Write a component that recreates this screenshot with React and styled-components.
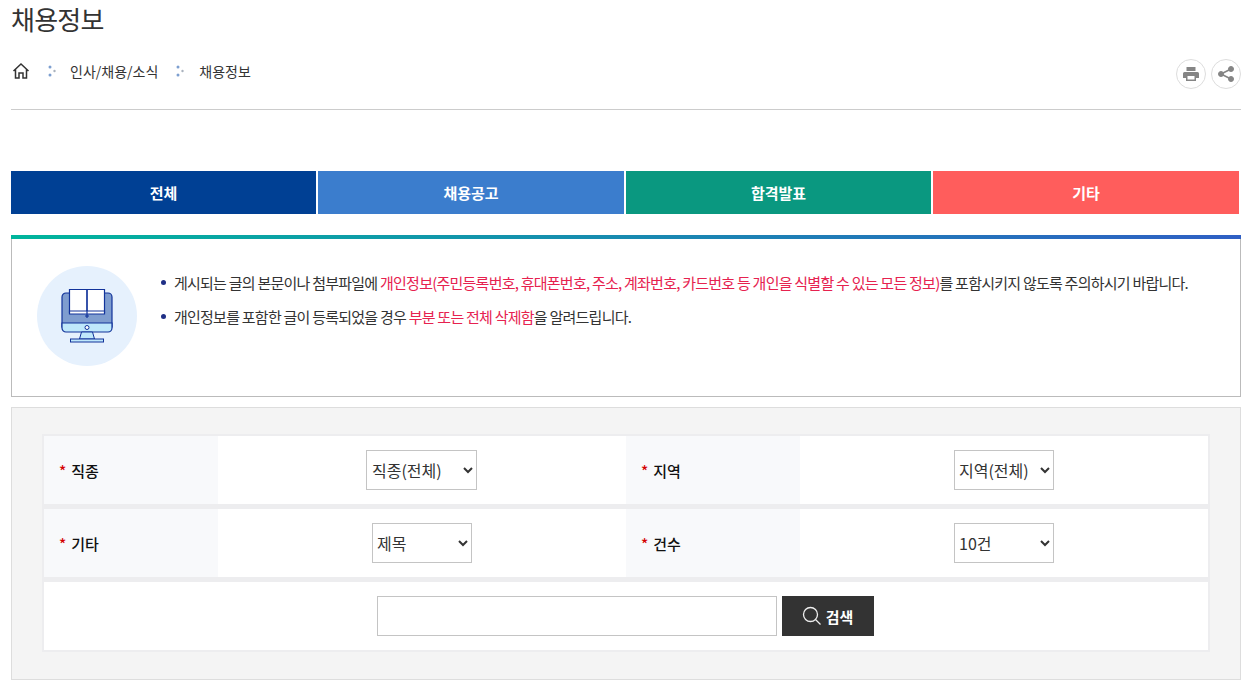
import React from 'react'
import styled, { createGlobalStyle } from 'styled-components'

const Global = createGlobalStyle`
  * { box-sizing: border-box; }
  body {
    margin: 0;
    background: #fff;
    color: #333;
    font-family: "Noto Sans CJK KR", "Noto Sans", sans-serif;
    font-size: 14px;
  }
`

const Page = styled.div`
  width: 1253px;
  height: 689px;
  overflow: hidden;
  padding: 0 12px 0 11px;
`

const Title = styled.h1`
  margin: 0;
  height: 49px;
  padding-top: 1px;
  font-size: 26px;
  line-height: 36px;
  font-weight: 400;
  letter-spacing: -0.75px;
  color: #333;
`

const Crumbs = styled.div`
  display: flex;
  align-items: center;
  justify-content: space-between;
  height: 61px;
  padding-bottom: 11px;
  border-bottom: 1px solid #ccc;
`

const CrumbList = styled.div`
  display: flex;
  align-items: center;
  padding: 0 0 5px 1px;
  font-size: 14px;
  color: #333;
`

const Sep = styled.svg`
  width: 8px;
  height: 12px;
  margin: 0 ${(p) => p.$right}px 0 18px;
`

const Actions = styled.div`
  display: flex;
  gap: 5px;
`

const RoundBtn = styled.button`
  width: 30px;
  height: 30px;
  padding: 0;
  border: 1px solid #ddd;
  border-radius: 50%;
  background: #fff;
  display: flex;
  align-items: center;
  justify-content: center;
`

const Tabs = styled.div`
  display: grid;
  grid-template-columns: 305px 306px 305px 306px;
  column-gap: 2px;
  margin-top: 61px;
`

const Tab = styled.a`
  height: 43px;
  display: flex;
  align-items: center;
  justify-content: center;
  background: ${(p) => p.$bg};
  color: #fff;
  font-size: 15px;
  font-weight: 700;
`

const Notice = styled.div`
  position: relative;
  display: flex;
  margin-top: 21px;
  height: 162px;
  padding: 31px 25px 0;
  border: 1px solid #bbb;
  border-top: 0;
  &::before {
    content: '';
    position: absolute;
    top: 0;
    left: -1px;
    right: -1px;
    height: 4px;
    background: linear-gradient(90deg, #00b59c, #2f5fc4);
  }
`

const IconCircle = styled.div`
  flex: none;
  width: 100px;
  height: 100px;
  border-radius: 50%;
  background: #e6f1fd;
  display: flex;
  align-items: center;
  justify-content: center;
`

const NoticeList = styled.ul`
  list-style: none;
  margin: -1px 0 0 24px;
  padding: 0;
`

const NoticeItem = styled.li`
  position: relative;
  height: 34px;
  padding-left: 13px;
  font-size: 15px;
  line-height: 35px;
  letter-spacing: -0.76px;
  color: #333;
  &::before {
    content: '';
    position: absolute;
    left: 0;
    top: 15px;
    width: 5px;
    height: 5px;
    border-radius: 50%;
    background: #1f2f86;
  }
`

const Red = styled.span`
  color: #e6224f;
`

const SearchBox = styled.div`
  margin-top: 10px;
  height: 273px;
  padding: 26px 30px 0;
  background: #f4f4f4;
  border: 1px solid #ddd;
`

const Row = styled.div`
  display: grid;
  grid-template-columns: 174px 408px 174px 408px;
  height: 73px;
  border: 2px solid #ededef;
  border-bottom-width: 3px;
  background: #fff;
`

const Label = styled.div`
  display: flex;
  align-items: center;
  padding-left: 15px;
  background: #f8f9fb;
  color: #111;
  font-size: 15px;
  font-weight: 500;
`

const Star = styled.span`
  color: #d40000;
  margin-right: 5px;
`

const Value = styled.div`
  display: flex;
  align-items: center;
  justify-content: center;
`

const Select = styled.select`
  width: ${(p) => p.$w}px;
  height: 40px;
  margin-right: ${(p) => p.$w % 2}px;
  padding: 0 0 0 ${(p) => p.$w % 2}px;
  border: 1px solid #c4c4c4;
  border-radius: 0;
  background: #fff;
  color: #333;
  font-family: inherit;
  font-size: 16px;
`

const SearchRow = styled.div`
  display: flex;
  align-items: center;
  justify-content: center;
  gap: 5px;
  height: 72px;
  padding-right: 2px;
  border: 2px solid #ededef;
  background: #fff;
`

const Input = styled.input`
  width: 400px;
  height: 40px;
  border: 1px solid #c4c4c4;
  background: #fff;
`

const SearchBtn = styled.button`
  width: 92px;
  height: 40px;
  border: 0;
  background: #333;
  color: #fff;
  font-family: inherit;
  font-size: 15px;
  font-weight: 700;
  display: flex;
  align-items: center;
  justify-content: center;
  gap: 4px;
  padding: 0;
`

function SepDots() {
  return (
    <>
      <circle cx="2" cy="2" r="1.5" fill="#7d9fd0" />
      <circle cx="6.500" cy="6" r="1.2" fill="#aab2be" />
      <circle cx="2" cy="10" r="1.5" fill="#7d9fd0" />
    </>
  )
}

function MonitorBook() {
  const line = '#12339a'
  return (
    <svg width="52" height="54" viewBox="0 0 52 54">
      <path d="M5 4h42a4 4 0 0 1 4 4v30H1V8a4 4 0 0 1 4-4z" fill="#7f9dcf" stroke={line} strokeWidth="1.200" />
      <path d="M1 34h50v5a4 4 0 0 1-4 4H5a4 4 0 0 1-4-4z" fill="#bfe8fb" stroke={line} strokeWidth="1.200" />
      <circle cx="26" cy="38.500" r="2" fill="#fff" stroke={line} strokeWidth="1" />
      <path d="M18.500 50l2-7h11l2 7z" fill="#bfe8fb" stroke={line} strokeWidth="1" />
      <rect x="9.500" y="50" width="33" height="3" fill="#bfe8fb" stroke={line} strokeWidth="1" />
      <path d="M8.500 0.500h17.500v23H8.500zM26 0.500h17.500v23H26z" fill="#fff" stroke={line} strokeWidth="1.200" />
      <path d="M8.500 22h35v3h-35z" fill="#fff" stroke={line} strokeWidth="1.200" />
      <path d="M26 1v28M24 27h4" stroke={line} strokeWidth="1.200" fill="none" />
    </svg>
  )
}

const tabs = [
  ['전체', '#004094'],
  ['채용공고', '#3b7dcd'],
  ['합격발표', '#0a9880'],
  ['기타', '#ff5d5c'],
]

export default function App() {
  return (
    <Page>
      <Global />
      <Title>채용정보</Title>
      <Crumbs>
        <CrumbList>
          <svg width="18" height="18" viewBox="0 0 18 18" fill="none" stroke="#333" strokeWidth="1.500">
            <path d="M1.500 9L9 2l7.500 7M3.500 7.500V16h3.500v-5h4v5h3.500V7.500" />
          </svg>
          <Sep $right={14} viewBox="0 0 8 12"><SepDots /></Sep>
          인사/채용/소식
          <Sep $right={15} viewBox="0 0 8 12"><SepDots /></Sep>
          채용정보
        </CrumbList>
        <Actions>
          <RoundBtn aria-label="print">
            <svg width="16" height="16" viewBox="0 0 16 16" fill="#858585">
              <path d="M3.500 1h9v4h-9zM1.500 6h13A1.500 1.500 0 0 1 16 7.500V12h-3v3H3v-3H0V7.500A1.500 1.500 0 0 1 1.500 6zM4.500 10v3.500h7V10z" fillRule="evenodd" />
            </svg>
          </RoundBtn>
          <RoundBtn aria-label="share">
            <svg width="16" height="16" viewBox="0 0 16 16" fill="#858585" stroke="#858585">
              <circle cx="3" cy="8" r="2.500" />
              <circle cx="13" cy="3" r="2.500" />
              <circle cx="13" cy="13" r="2.500" />
              <path d="M3 8l10-5M3 8l10 5" strokeWidth="1.600" fill="none" />
            </svg>
          </RoundBtn>
        </Actions>
      </Crumbs>
      <Tabs>
        {tabs.map(([t, c]) => (
          <Tab key={t} $bg={c}>{t}</Tab>
        ))}
      </Tabs>
      <Notice>
        <IconCircle><MonitorBook /></IconCircle>
        <NoticeList>
          <NoticeItem>
            게시되는 글의 본문이나 첨부파일에 <Red>개인정보(주민등록번호, 휴대폰번호, 주소, 계좌번호, 카드번호 등 개인을 식별할 수 있는 모든 정보)</Red>를 포함시키지 않도록 주의하시기 바랍니다.
          </NoticeItem>
          <NoticeItem>
            개인정보를 포함한 글이 등록되었을 경우 <Red>부분 또는 전체 삭제함</Red>을 알려드립니다.
          </NoticeItem>
        </NoticeList>
      </Notice>
      <SearchBox>
        <Row>
          <Label><Star>*</Star>직종</Label>
          <Value>
            <Select $w={111}><option>직종(전체)</option></Select>
          </Value>
          <Label><Star>*</Star>지역</Label>
          <Value>
            <Select $w={100}><option>지역(전체)</option></Select>
          </Value>
        </Row>
        <Row>
          <Label><Star>*</Star>기타</Label>
          <Value>
            <Select $w={100}><option>제목</option></Select>
          </Value>
          <Label><Star>*</Star>건수</Label>
          <Value>
            <Select $w={100}><option>10건</option></Select>
          </Value>
        </Row>
        <SearchRow>
          <Input type="text" />
          <SearchBtn>
            <svg width="20" height="20" viewBox="0 0 20 20" fill="none" stroke="#eee" strokeWidth="1.300">
              <circle cx="8.500" cy="8.500" r="7" />
              <path d="M13.500 13.500l5 5" />
            </svg>
            검색
          </SearchBtn>
        </SearchRow>
      </SearchBox>
    </Page>
  )
}
